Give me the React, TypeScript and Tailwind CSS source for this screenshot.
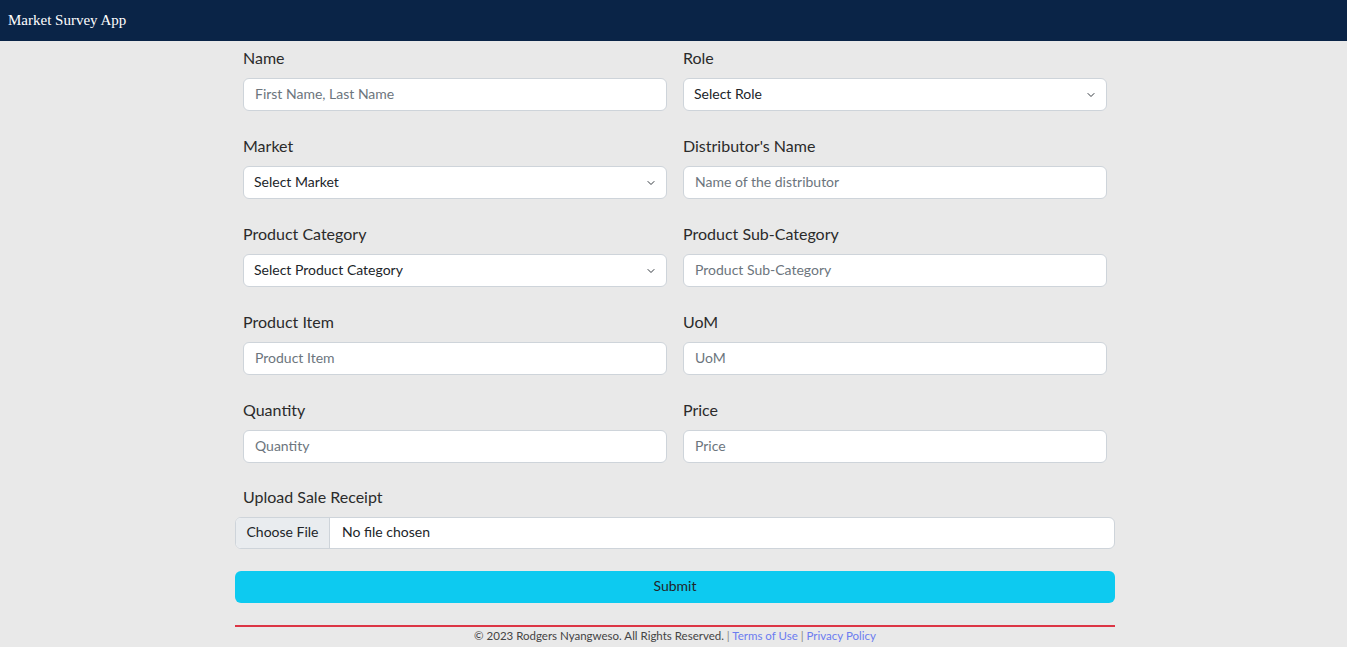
import React from "react";

const Chevron = () => (
  <svg width="8" height="8" viewBox="0 0 16 16" className="text-[#343a40]">
    <path d="M2 5l6 6 6-6" fill="none" stroke="currentColor" strokeWidth="2" strokeLinecap="round" strokeLinejoin="round" />
  </svg>
);

const Label = ({ children }: { children: React.ReactNode }) => (
  <div className="h-6 leading-6 text-[16px] text-[#2b2b2b] mb-2">{children}</div>
);

const Input = ({ placeholder }: { placeholder: string }) => (
  <input
    placeholder={placeholder}
    className="w-full h-[33px] rounded-md border border-[#ced4da] bg-white pl-[11px] pr-3 pb-[3px] text-[14px] text-[#212529] placeholder:text-[#6c757d] outline-none"
    style={{ fontFamily: "Lato, sans-serif" }}
  />
);

const Select = ({ text }: { text: string }) => (
  <div className="w-full h-[33px] rounded-md border border-[#ced4da] bg-white pl-[10px] pr-[11px] pb-[3px] text-[14px] text-[#212529] flex items-center justify-between">
    <span>{text}</span>
    <span className="pt-[3px]"><Chevron /></span>
  </div>
);

const Field = ({ label, children }: { label: string; children: React.ReactNode }) => (
  <div className="px-2 pb-[23px]">
    <Label>{label}</Label>
    {children}
  </div>
);

export default function App() {
  return (
    <div className="min-h-[647px] bg-[#e9e9e9]" style={{ fontFamily: "Lato, sans-serif" }}>
      <div className="h-[41px] bg-[#0a2447] flex items-center px-2">
        <span className="text-[15px] text-white" style={{ fontFamily: "'Liberation Serif', serif" }}>
          Market Survey App
        </span>
      </div>
      <div className="w-[880px] ml-[235px] pt-[5px]">
        <div className="grid grid-cols-2">
          <Field label="Name"><Input placeholder="First Name, Last Name" /></Field>
          <Field label="Role"><Select text="Select Role" /></Field>
          <Field label="Market"><Select text="Select Market" /></Field>
          <Field label="Distributor's Name"><Input placeholder="Name of the distributor" /></Field>
          <Field label="Product Category"><Select text="Select Product Category" /></Field>
          <Field label="Product Sub-Category"><Input placeholder="Product Sub-Category" /></Field>
          <Field label="Product Item"><Input placeholder="Product Item" /></Field>
          <Field label="UoM"><Input placeholder="UoM" /></Field>
          <Field label="Quantity"><Input placeholder="Quantity" /></Field>
          <Field label="Price"><Input placeholder="Price" /></Field>
        </div>
        <div className="px-2 -mt-px">
          <Label>Upload Sale Receipt</Label>
        </div>
        <div className="h-[32px] rounded-md border border-[#ced4da] bg-white flex items-stretch overflow-hidden text-[14px] text-[#212529]">
          <div className="w-[94px] bg-[#e9ecef] border-r border-[#ced4da] flex items-center justify-center pb-[3px]">Choose File</div>
          <div className="flex items-center pl-3 pb-[3px]">No file chosen</div>
        </div>
        <button className="mt-[22px] w-full h-[32px] rounded-md bg-[#0dcaf0] text-[14px] text-[#212529] pb-[3px]">Submit</button>
        <div className="mt-[22px] h-[2px] bg-[#dc3545]" />
        <div className="text-center text-[11.5px] text-[#444] leading-4 mt-[1px]">
          © 2023 Rodgers Nyangweso. All Rights Reserved. <span className="text-[#888]">|</span>{" "}
          <span className="text-[#6b7cf0]">Terms of Use</span> <span className="text-[#888]">|</span>{" "}
          <span className="text-[#6b7cf0]">Privacy Policy</span>
        </div>
      </div>
    </div>
  );
}
